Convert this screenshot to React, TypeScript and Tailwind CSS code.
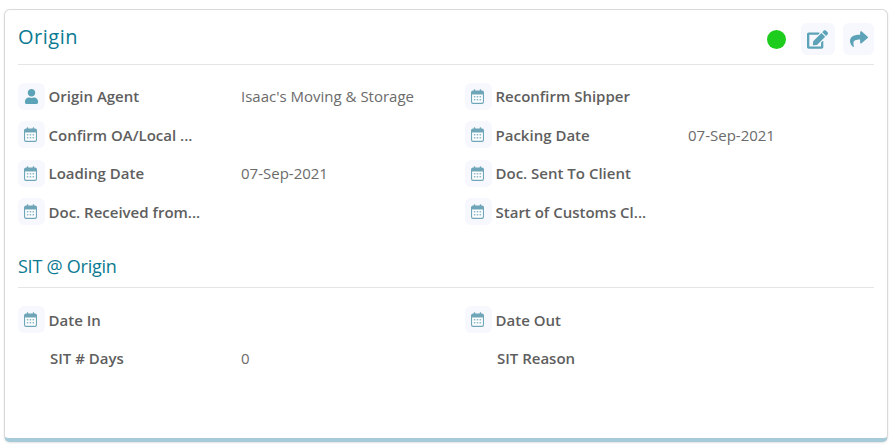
import { FaEdit, FaShare, FaUser } from 'react-icons/fa';
import type { ReactNode } from 'react';

const originRows = [
  [
    { icon: 'user', label: 'Origin Agent', value: "Isaac's Moving & Storage" },
    { icon: 'cal', label: 'Reconfirm Shipper', value: '' },
  ],
  [
    { icon: 'cal', label: 'Confirm OA/Local ...', value: '' },
    { icon: 'cal', label: 'Packing Date', value: '07-Sep-2021' },
  ],
  [
    { icon: 'cal', label: 'Loading Date', value: '07-Sep-2021' },
    { icon: 'cal', label: 'Doc. Sent To Client', value: '' },
  ],
  [
    { icon: 'cal', label: 'Doc. Received from...', value: '' },
    { icon: 'cal', label: 'Start of Customs Cl...', value: '' },
  ],
];

const sitRows = [
  [
    { icon: 'cal', label: 'Date In', value: '' },
    { icon: 'cal', label: 'Date Out', value: '' },
  ],
  [
    { icon: '', label: 'SIT # Days', value: '0' },
    { icon: '', label: 'SIT Reason', value: '' },
  ],
];

function CalendarIcon() {
  return (
    <svg width="13" height="15" viewBox="0 0 14 15" preserveAspectRatio="none" className="-ml-[2px]">
      <rect x="0.6" y="2.1" width="12.8" height="12.3" rx="1.6" fill="#fff" stroke="#6fa5b8" strokeWidth="1.2" />
      <rect x="0.6" y="2.1" width="12.8" height="3.4" rx="1.2" fill="#6fa5b8" />
      <rect x="3" y="0.3" width="1.6" height="3" rx="0.6" fill="#6fa5b8" />
      <rect x="9.4" y="0.3" width="1.6" height="3" rx="0.6" fill="#6fa5b8" />
      <path
        d="M3 7h1.7v1.6H3zM6.1 7h1.7v1.6H6.1zM9.2 7h1.7v1.6H9.2zM3 10h1.7v1.6H3zM6.1 10h1.7v1.6H6.1zM9.2 10h1.7v1.6H9.2z"
        fill="#8db8c8"
      />
    </svg>
  );
}

function IconBox({ children, className }: { children: ReactNode; className: string }) {
  return (
    <div className={`flex items-center justify-center rounded-md bg-[#f6f8fd] text-[#5da3b8] ${className}`}>
      {children}
    </div>
  );
}

function Field({ icon, label, value }: { icon: string; label: string; value: string }) {
  return (
    <div className="flex h-[38.5px] items-center">
      {icon ? (
        <IconBox className="h-[27px] w-[27px] shrink-0">
          {icon === 'user' ? <FaUser size={15} className="-ml-px" /> : <CalendarIcon />}
        </IconBox>
      ) : (
        <div className="w-[29px] shrink-0" />
      )}
      <div className={`${icon ? 'ml-[3.5px] w-[192.5px]' : 'ml-[3px] w-[191px]'} shrink-0 truncate text-[15px] font-semibold text-[#5e5e5e]`}>
        {label}
      </div>
      <div className="text-[15px] text-[#6b6b6b]">{value}</div>
    </div>
  );
}

function FieldGrid({ rows }: { rows: { icon: string; label: string; value: string }[][] }) {
  return (
    <div className="flex flex-col">
      {rows.map((row) => (
        <div key={row[0].label} className="grid grid-cols-[447px_1fr]">
          {row.map((f) => (
            <Field key={f.label} {...f} />
          ))}
        </div>
      ))}
    </div>
  );
}

export default function App() {
  return (
    <div className="h-[448px] w-[895px] bg-white pl-1 pt-[9px] font-['Open_Sans',sans-serif]">
      <div className="h-[433px] w-[884px] rounded-md border border-b-4 border-[#d9d9d9] border-b-[#a6cbd8] bg-white px-[13px] shadow-[0_1px_2px_rgba(0,0,0,0.12)]">
        <div className="flex h-[55px] items-center justify-between border-b border-[#e5e5e5]">
          <h1 className="text-[20px] tracking-[0.5px] text-[#0b7a92]">Origin</h1>
          <div className="mt-[4px] flex items-center">
            <div className="mt-px h-[19px] w-[19px] rounded-full bg-[#1dcc1d]" />
            <IconBox className="ml-[15px] h-8 w-[34px] rounded-lg">
              <FaEdit size={21} className="-ml-[2px]" />
            </IconBox>
            <IconBox className="ml-[8px] h-8 w-[31px] rounded-lg">
              <FaShare size={18} />
            </IconBox>
          </div>
        </div>
        <div className="pt-[12px]">
          <FieldGrid rows={originRows} />
        </div>
        <div className="mt-[17px] flex h-[40px] items-center border-b border-[#e5e5e5] pb-[2px]">
          <h2 className="text-[18px] tracking-[-0.25px] text-[#0b7a92]">SIT @ Origin</h2>
        </div>
        <div className="pt-[12.5px]">
          <FieldGrid rows={sitRows} />
        </div>
      </div>
    </div>
  );
}
